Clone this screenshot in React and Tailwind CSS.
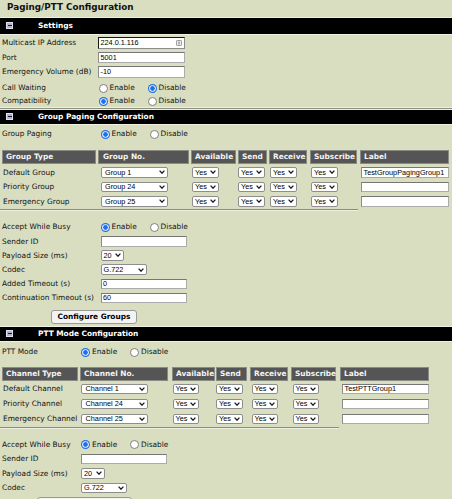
import React from "react";

const LABEL = "text-[7.4px] leading-none whitespace-nowrap text-[#111]";
const FIELD_TEXT =
  "font-['Liberation_Sans',Arial,sans-serif] text-[7.3px] leading-none whitespace-nowrap text-black";

function Radio({ on }) {
  return on ? (
    <svg width="9" height="9" viewBox="0 0 9 9" className="shrink-0">
      <circle cx="4.5" cy="4.5" r="4.5" fill="#1f6fe6" />
      <circle cx="4.5" cy="4.5" r="3.3" fill="#ffffff" />
      <circle cx="4.5" cy="4.5" r="2.4" fill="#1f6fe6" />
    </svg>
  ) : (
    <svg width="9" height="9" viewBox="0 0 9 9" className="shrink-0">
      <circle cx="4.5" cy="4.5" r="4" fill="#ffffff" stroke="#727272" strokeWidth="0.9" />
    </svg>
  );
}

function RadioPair({ enable }) {
  return (
    <div className="flex items-center">
      <div className="flex w-[49px] items-center gap-[2px]">
        <Radio on={enable} />
        <span className={LABEL}>Enable</span>
      </div>
      <div className="flex items-center gap-[2px]">
        <Radio on={!enable} />
        <span className={LABEL}>Disable</span>
      </div>
    </div>
  );
}

function Chevron() {
  return (
    <svg width="6" height="4" viewBox="0 0 6 4" className="shrink-0">
      <path d="M0.6 0.6 L3 3.2 L5.4 0.6" fill="none" stroke="#1a1a1a" strokeWidth="1.3" />
    </svg>
  );
}

function Select({ text, w, pad = "pl-[2px]" }) {
  return (
    <div
      className={`flex h-[10.5px] items-center justify-between rounded-[2px] border border-[#8e8e8e] bg-white pr-[2px] ${pad} ${w}`}
    >
      <span className={FIELD_TEXT}>{text}</span>
      <Chevron />
    </div>
  );
}

function TextInput({ value = "", w, h = "h-[10.5px]", focus = false }) {
  return (
    <div
      className={`flex items-center justify-between bg-white pl-[1.5px] pr-[2px] ${w} ${h} ${
        focus
          ? "border border-[#161616] border-r-[#8c8c8c] border-b-[#8c8c8c]"
          : "border border-[#ababab] border-t-[#767676] border-l-[#8c8c8c]"
      }`}
    >
      <span className={FIELD_TEXT}>{value}</span>
      {focus && (
        <svg width="6" height="6" viewBox="0 0 6 6" className="shrink-0">
          <rect x="0.5" y="0.5" width="5" height="5" rx="0.6" fill="#ededed" stroke="#8a8a8a" strokeWidth="0.8" />
          <rect x="2.4" y="1.6" width="1.2" height="2.8" fill="#8a8a8a" />
        </svg>
      )}
    </div>
  );
}

function Bar({ title, h }) {
  return (
    <div className={`flex items-center border-y border-[#eef0e2] bg-black ${h}`}>
      <div className="ml-[6px] -mt-[1px] flex h-[7px] w-[7px] items-center justify-center border border-[#dfe1ec] bg-[#aeb3c9]">
        <div className="h-[1.5px] w-[4px] bg-[#14163a]" />
      </div>
      <span className="ml-[25px] text-[7.4px] font-bold leading-none text-white whitespace-nowrap">{title}</span>
    </div>
  );
}

function Row({ label, col, h, children }) {
  return (
    <div className={`flex items-center ${h}`}>
      <div className={`flex shrink-0 items-center pl-[2px] ${LABEL} ${col}`}>{label}</div>
      {children}
    </div>
  );
}

function HeadCell({ cls, children }) {
  return (
    <div className={`flex h-full shrink-0 items-center border border-[#8b8b85] bg-[#555555] pl-[3px] ${cls}`}>
      <span className="text-[7.4px] font-bold leading-none text-[#f4f4f4] whitespace-nowrap">{children}</span>
    </div>
  );
}

function Cell({ cls, children }) {
  return <div className={`flex h-full shrink-0 items-center ${cls}`}>{children}</div>;
}

function Divider({ w }) {
  return (
    <div className={w}>
      <div className="h-[1px] bg-[#8b8e7c]" />
      <div className="h-[1px] bg-[#eceee0]" />
    </div>
  );
}

const groupRows = [
  ["Default Group", "Group 1", "TestGroupPagingGroup1"],
  ["Priority Group", "Group 24", ""],
  ["Emergency Group", "Group 25", ""],
];

const channelRows = [
  ["Default Channel", "Channel 1", "TestPTTGroup1"],
  ["Priority Channel", "Channel 24", ""],
  ["Emergency Channel", "Channel 25", ""],
];

export default function App() {
  return (
    <div className="h-[499px] w-[452px] overflow-hidden bg-[#d9dec1] font-['DejaVu_Sans',Verdana,sans-serif] text-[7.4px] leading-none text-[#111]">
      {/* page title */}
      <div className="h-[17px] pl-[7px] pt-[2px] text-[8.8px] font-bold leading-[10px] whitespace-nowrap">
        Paging/PTT Configuration
      </div>

      <Bar title="Settings" h="h-[18px]" />

      {/* general settings */}
      <div className="pt-[1px]">
        <Row label="Multicast IP Address" col="w-[98px]" h="h-[14px]">
          <TextInput value="224.0.1.116" w="w-[87px]" h="h-[12px]" focus />
        </Row>
        <Row label="Port" col="w-[98px]" h="h-[15px]">
          <TextInput value="5001" w="w-[87px]" h="h-[11.5px]" />
        </Row>
        <Row label="Emergency Volume (dB)" col="w-[98px]" h="h-[14px]">
          <TextInput value="-10" w="w-[87px]" h="h-[11.5px]" />
        </Row>
        <div className="h-[2px]" />
        <Row label="Call Waiting" col="w-[98.5px]" h="h-[14px]">
          <RadioPair enable={false} />
        </Row>
        <Row label="Compatibility" col="w-[98.5px]" h="h-[12px]">
          <RadioPair enable />
        </Row>
      </div>
      <div className="h-[1px] bg-[#eef0e2]" />
      <div className="h-[1px] bg-[#8b8e7c]" />

      <Bar title="Group Paging Configuration" h="h-[16px]" />

      {/* group paging */}
      <div className="mt-[2px]">
        <Row label="Group Paging" col="w-[100.5px]" h="h-[14px]">
          <RadioPair enable />
        </Row>
      </div>

      <div className="mt-[9px] flex h-[14px]">
        <HeadCell cls="ml-[2px] w-[94px]">Group Type</HeadCell>
        <HeadCell cls="ml-[2px] w-[91px] pl-[4px]">Group No.</HeadCell>
        <HeadCell cls="ml-[2px] w-[45px]">Available</HeadCell>
        <HeadCell cls="ml-[2px] w-[29px]">Send</HeadCell>
        <HeadCell cls="ml-[2px] w-[38px]">Receive</HeadCell>
        <HeadCell cls="ml-[3px] w-[47px]">Subscribe</HeadCell>
        <HeadCell cls="ml-[3px] w-[89px]">Label</HeadCell>
      </div>
      <div className="mt-[1px]">
        {groupRows.map(([type, no, label]) => (
          <div key={type} className="flex h-[14.5px]">
            <Cell cls="ml-[2px] w-[94px] pl-[1px]">
              <span className={LABEL}>{type}</span>
            </Cell>
            <Cell cls="ml-[2px] w-[91px] pl-[2.5px]">
              <Select text={no} w="w-[67.5px]" pad="pl-[3.5px]" />
            </Cell>
            <Cell cls="ml-[2px] w-[45px] pl-[1px]">
              <Select text="Yes" w="w-[26.5px]" />
            </Cell>
            <Cell cls="ml-[2px] w-[29px]">
              <Select text="Yes" w="w-[27px]" />
            </Cell>
            <Cell cls="ml-[2px] w-[38px] pl-[1px]">
              <Select text="Yes" w="w-[27px]" />
            </Cell>
            <Cell cls="ml-[3px] w-[47px] pl-[1px]">
              <Select text="Yes" w="w-[27px]" />
            </Cell>
            <Cell cls="ml-[3px] w-[89px] pl-[1px]">
              <TextInput value={label} w="w-[87.5px]" />
            </Cell>
          </div>
        ))}
      </div>
      <div className="mt-[0.5px]">
        <Divider w="w-[358px]" />
      </div>

      <div className="mt-[9px]">
        <Row label="Accept While Busy" col="w-[100.5px]" h="h-[14.2px]">
          <RadioPair enable />
        </Row>
        <Row label="Sender ID" col="w-[100.5px]" h="h-[14.2px]">
          <TextInput w="w-[86.5px]" />
        </Row>
        <Row label="Payload Size (ms)" col="w-[100.5px]" h="h-[14.2px]">
          <Select text="20" w="w-[23.5px]" />
        </Row>
        <Row label="Codec" col="w-[100.5px]" h="h-[14.2px]">
          <Select text="G.722" w="w-[46px]" />
        </Row>
        <Row label="Added Timeout (s)" col="w-[100.5px]" h="h-[14.2px]">
          <TextInput value="0" w="w-[86.5px]" />
        </Row>
        <Row label="Continuation Timeout (s)" col="w-[100.5px]" h="h-[14.2px]">
          <TextInput value="60" w="w-[86.5px]" />
        </Row>
      </div>
      <button className="ml-[51px] mt-[5px] flex h-[14px] w-[86px] items-center justify-center rounded-[3px] border border-[#9a9a9a] bg-[#f3f3f3]">
        <span className="text-[7.4px] font-bold leading-none text-black whitespace-nowrap">Configure Groups</span>
      </button>

      <div className="mt-[2px]">
        <Bar title="PTT Mode Configuration" h="h-[16px]" />
      </div>

      {/* PTT mode */}
      <div className="mt-[3px]">
        <Row label="PTT Mode" col="w-[81px]" h="h-[14px]">
          <RadioPair enable />
        </Row>
      </div>

      <div className="mt-[8px] flex h-[14px]">
        <HeadCell cls="ml-[2px] w-[76px]">Channel Type</HeadCell>
        <HeadCell cls="ml-[2px] w-[88px]">Channel No.</HeadCell>
        <HeadCell cls="ml-[4px] w-[43px] pl-[2px]">Available</HeadCell>
        <HeadCell cls="ml-[1px] w-[31px]">Send</HeadCell>
        <HeadCell cls="ml-[3px] w-[38px]">Receive</HeadCell>
        <HeadCell cls="ml-[3px] w-[45px]">Subscribe</HeadCell>
        <HeadCell cls="ml-[4px] w-[89px]">Label</HeadCell>
      </div>
      <div className="mt-[0.5px]">
        {channelRows.map(([type, no, label]) => (
          <div key={type} className="flex h-[15px]">
            <Cell cls="ml-[2px] w-[76px] pl-[1px]">
              <span className={LABEL}>{type}</span>
            </Cell>
            <Cell cls="ml-[2px] w-[88px] pl-[1px]">
              <Select text={no} w="w-[67px]" pad="pl-[3.5px]" />
            </Cell>
            <Cell cls="ml-[4px] w-[43px] pl-[0.5px]">
              <Select text="Yes" w="w-[26.5px]" />
            </Cell>
            <Cell cls="ml-[1px] w-[31px]">
              <Select text="Yes" w="w-[27px]" />
            </Cell>
            <Cell cls="ml-[3px] w-[38px] pl-[1.5px]">
              <Select text="Yes" w="w-[26.5px]" />
            </Cell>
            <Cell cls="ml-[3px] w-[45px] pl-[1.5px]">
              <Select text="Yes" w="w-[26.5px]" />
            </Cell>
            <Cell cls="ml-[4px] w-[89px] pl-[2px]">
              <TextInput value={label} w="w-[86.5px]" />
            </Cell>
          </div>
        ))}
      </div>
      <div className="mt-[0.5px]">
        <Divider w="w-[339px]" />
      </div>

      <div className="mt-[8px]">
        <Row label="Accept While Busy" col="w-[81px]" h="h-[14.5px]">
          <RadioPair enable />
        </Row>
        <Row label="Sender ID" col="w-[81px]" h="h-[14.5px]">
          <TextInput w="w-[86px]" />
        </Row>
        <Row label="Payload Size (ms)" col="w-[81px]" h="h-[14.5px]">
          <Select text="20" w="w-[23.5px]" />
        </Row>
        <Row label="Codec" col="w-[81px]" h="h-[14.5px]">
          <Select text="G.722" w="w-[45.5px]" />
        </Row>
      </div>
      {/* channel setup button, only its top edge fits on the page */}
      <div className="ml-[37px] mt-[2px] h-[14px] w-[95px] rounded-[3px] border border-[#9a9a9a] bg-[#f3f3f3]" />
    </div>
  );
}
